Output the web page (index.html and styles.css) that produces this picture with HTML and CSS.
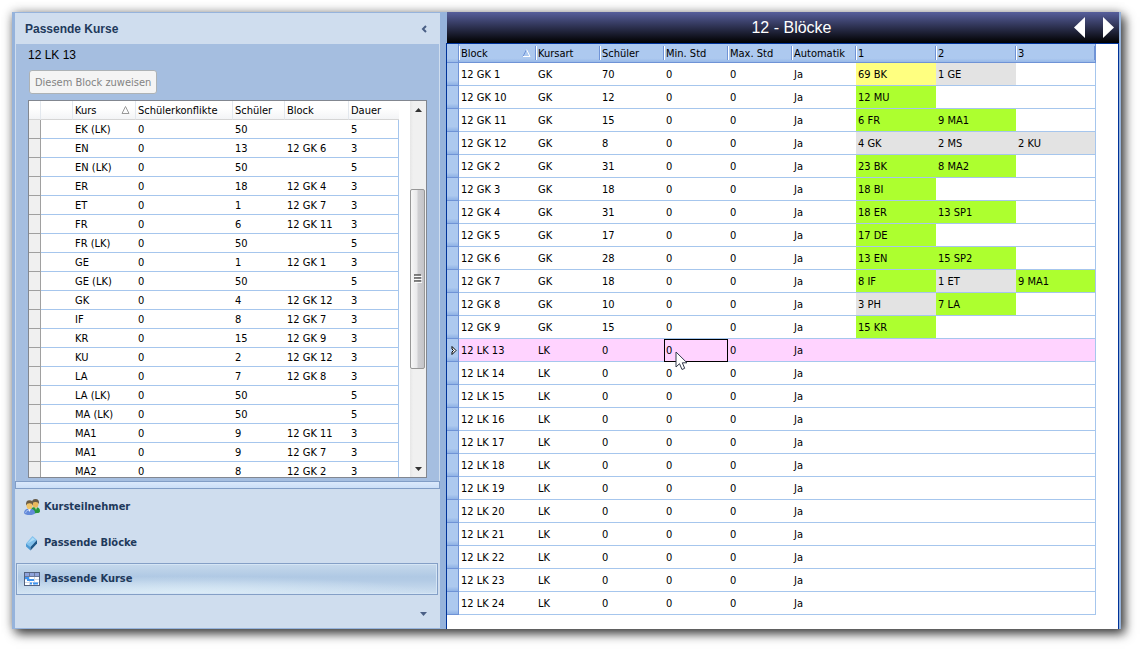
FILE: index.html
```html
<!DOCTYPE html>
<html lang="de">
<head>
<meta charset="utf-8">
<title>12 - Blöcke</title>
<link rel="stylesheet" href="styles.css">
</head>
<body>
<div class="window">
  <aside class="sidebar">
    <header class="side-head">
      <h2>Passende Kurse</h2>
      <button class="collapse" type="button" aria-label="Einklappen">
        <svg width="6" height="8" viewBox="0 0 6 8"><path d="M5 1L2 4L5 7" fill="none" stroke="#4a5f85" stroke-width="2"/></svg>
      </button>
    </header>
    <section class="side-body">
      <div class="block-name">12 LK 13</div>
      <button class="assign" type="button" disabled>Diesem Block zuweisen</button>
      <div class="list">
        <div class="list-view">
          <table class="courses">
            <colgroup><col class="c-mark"><col class="c-indent"><col class="c-kurs"><col class="c-konf"><col class="c-sch"><col class="c-block"><col class="c-dauer"></colgroup>
            <thead><tr><th></th><th></th><th>Kurs<svg class="sort" width="9" height="8" viewBox="0 0 9 8"><path d="M4.5 0.5L8 7.5H1Z" fill="none" stroke="#999"/></svg></th><th>Schülerkonflikte</th><th>Schüler</th><th>Block</th><th>Dauer</th></tr></thead>
            <tbody>
              <tr><td></td><td></td><td>EK (LK)</td><td>0</td><td>50</td><td></td><td>5</td></tr>
              <tr><td></td><td></td><td>EN</td><td>0</td><td>13</td><td>12 GK 6</td><td>3</td></tr>
              <tr><td></td><td></td><td>EN (LK)</td><td>0</td><td>50</td><td></td><td>5</td></tr>
              <tr><td></td><td></td><td>ER</td><td>0</td><td>18</td><td>12 GK 4</td><td>3</td></tr>
              <tr><td></td><td></td><td>ET</td><td>0</td><td>1</td><td>12 GK 7</td><td>3</td></tr>
              <tr><td></td><td></td><td>FR</td><td>0</td><td>6</td><td>12 GK 11</td><td>3</td></tr>
              <tr><td></td><td></td><td>FR (LK)</td><td>0</td><td>50</td><td></td><td>5</td></tr>
              <tr><td></td><td></td><td>GE</td><td>0</td><td>1</td><td>12 GK 1</td><td>3</td></tr>
              <tr><td></td><td></td><td>GE (LK)</td><td>0</td><td>50</td><td></td><td>5</td></tr>
              <tr><td></td><td></td><td>GK</td><td>0</td><td>4</td><td>12 GK 12</td><td>3</td></tr>
              <tr><td></td><td></td><td>IF</td><td>0</td><td>8</td><td>12 GK 7</td><td>3</td></tr>
              <tr><td></td><td></td><td>KR</td><td>0</td><td>15</td><td>12 GK 9</td><td>3</td></tr>
              <tr><td></td><td></td><td>KU</td><td>0</td><td>2</td><td>12 GK 12</td><td>3</td></tr>
              <tr><td></td><td></td><td>LA</td><td>0</td><td>7</td><td>12 GK 8</td><td>3</td></tr>
              <tr><td></td><td></td><td>LA (LK)</td><td>0</td><td>50</td><td></td><td>5</td></tr>
              <tr><td></td><td></td><td>MA (LK)</td><td>0</td><td>50</td><td></td><td>5</td></tr>
              <tr><td></td><td></td><td>MA1</td><td>0</td><td>9</td><td>12 GK 11</td><td>3</td></tr>
              <tr><td></td><td></td><td>MA1</td><td>0</td><td>9</td><td>12 GK 7</td><td>3</td></tr>
              <tr><td></td><td></td><td>MA2</td><td>0</td><td>8</td><td>12 GK 2</td><td>3</td></tr>
            </tbody>
          </table>
        </div>
        <div class="scrollbar" aria-hidden="true">
          <div class="arrow"><svg width="7" height="4" viewBox="0 0 7 4"><path d="M0 4L3.5 0L7 4Z" fill="#333"/></svg></div>
          <div class="gap-top"></div>
          <div class="thumb"><svg width="8" height="9" viewBox="0 0 8 9"><path d="M0 1H7M0 4H7M0 7H7" stroke="#555" stroke-width="1.4"/><path d="M1 2.4H8M1 5.4H8M1 8.4H8" stroke="#fff"/></svg></div>
          <div class="gap-bottom"></div>
          <div class="arrow"><svg width="7" height="4" viewBox="0 0 7 4"><path d="M0 0L3.5 4L7 0Z" fill="#333"/></svg></div>
        </div>
      </div>
    </section>
    <div class="splitter"></div>
    <nav class="nav">
      <button class="nav-item" type="button">
        <svg width="16" height="16" viewBox="0 0 16 16">
          <path d="M7 15V11Q7 8 11 8Q16 8 16 12Q16 14 13 14Z" fill="#27963a"/>
          <path d="M11 8L12 11L13 8Z" fill="#e8f3e0"/>
          <ellipse cx="11.5" cy="5" rx="3" ry="3.7" fill="#e9b85c"/>
          <path d="M8 5Q7.4 0 11.5 0Q15.5 0 15 5Q14 2.5 11 3Q9 3 8 5Z" fill="#665a47"/>
          <path d="M0 14Q0 9.500 5.500 9.500Q11 9.500 11 14Q10 16 5.500 16Q1 16 0 14Z" fill="#6389d9"/>
          <path d="M1.5 14Q2 11 5 11" fill="none" stroke="#a9c2f2"/>
          <path d="M4 9.5L5.5 13L7 9.5Z" fill="#f2f5fb"/>
          <ellipse cx="5.5" cy="6.5" rx="3" ry="3.7" fill="#f0c469"/>
          <path d="M2 6.5Q1.5 1.3 5.5 1.3Q9.5 1.3 9 6.5Q8 4 5.5 4.2Q3 4 2 6.5Z" fill="#6b5c45"/>
        </svg><span>Kursteilnehmer</span>
      </button>
      <button class="nav-item" type="button">
        <svg width="16" height="16" viewBox="0 0 16 16">
          <path d="M2 8.5L8.5 1L13 5L6.5 12Z" fill="#82c1ec"/>
          <path d="M3.5 8.5L8.5 2.5L11 4.5Z" fill="#abdcf8"/>
          <path d="M2 8.5L6.5 12V15.5L2 11.5Z" fill="#4b9ad5"/>
          <path d="M6.5 12L13 5V8.5L6.5 15.5Z" fill="#1d5788"/>
        </svg><span>Passende Blöcke</span>
      </button>
      <button class="nav-item active" type="button">
        <svg width="16" height="16" viewBox="0 0 16 16">
          <rect x="0.5" y="1.5" width="15" height="13" fill="#fff" stroke="#53627f"/>
          <path d="M1 2H15V5H1Z" fill="#8fa3da"/>
          <path d="M1 5.5H15M5.5 2V5M10.5 2V5" fill="none" stroke="#6a7899"/>
          <path d="M5.5 6V14M10.5 6V14M1 8.500H15M1 11.500H15" stroke="#d3dbe9"/>
          <path d="M1 7H5M3 9H10M6 12.500H8M9 12.500H14" stroke="#3d93ef" stroke-width="2"/>
        </svg><span>Passende Kurse</span>
      </button>
      <div class="nav-foot">
        <button type="button" aria-label="Weitere Optionen"><svg width="7" height="4" viewBox="0 0 7 4"><path d="M0 0H7L3.5 4Z" fill="#4a5f85"/></svg></button>
      </div>
    </nav>
  </aside>
  <main class="main">
    <header class="title-bar">
      <h1>12 - Blöcke</h1>
      <div class="pager">
        <button type="button" aria-label="Zurück"><svg width="11" height="21" viewBox="0 0 11 21"><path d="M11 0V21L0 10.5Z" fill="#fff"/></svg></button>
        <button type="button" aria-label="Weiter"><svg width="11" height="21" viewBox="0 0 11 21"><path d="M0 0V21L11 10.5Z" fill="#fff"/></svg></button>
      </div>
    </header>
    <div class="grid-area">
      <table class="blocks">
        <colgroup><col class="b-mark"><col class="b-block"><col span="5" class="b-std"><col span="3" class="b-slot"></colgroup>
        <thead><tr><th></th><th>Block<svg class="sort" width="9" height="8" viewBox="0 0 9 8"><path d="M4.5 0.5L1 7.5" stroke="#6f93d6"/><path d="M4.5 0.5L8 7.5H1" fill="none" stroke="#fff"/></svg></th><th>Kursart</th><th>Schüler</th><th>Min. Std</th><th>Max. Std</th><th>Automatik</th><th>1</th><th>2</th><th>3</th></tr></thead>
        <tbody>
          <tr><td></td><td>12 GK 1</td><td>GK</td><td>70</td><td>0</td><td>0</td><td>Ja</td><td class="warn">69 BK</td><td class="few">1 GE</td><td></td></tr>
          <tr><td></td><td>12 GK 10</td><td>GK</td><td>12</td><td>0</td><td>0</td><td>Ja</td><td class="ok">12 MU</td><td></td><td></td></tr>
          <tr><td></td><td>12 GK 11</td><td>GK</td><td>15</td><td>0</td><td>0</td><td>Ja</td><td class="ok">6 FR</td><td class="ok">9 MA1</td><td></td></tr>
          <tr><td></td><td>12 GK 12</td><td>GK</td><td>8</td><td>0</td><td>0</td><td>Ja</td><td class="few">4 GK</td><td class="few">2 MS</td><td class="few">2 KU</td></tr>
          <tr><td></td><td>12 GK 2</td><td>GK</td><td>31</td><td>0</td><td>0</td><td>Ja</td><td class="ok">23 BK</td><td class="ok">8 MA2</td><td></td></tr>
          <tr><td></td><td>12 GK 3</td><td>GK</td><td>18</td><td>0</td><td>0</td><td>Ja</td><td class="ok">18 BI</td><td></td><td></td></tr>
          <tr><td></td><td>12 GK 4</td><td>GK</td><td>31</td><td>0</td><td>0</td><td>Ja</td><td class="ok">18 ER</td><td class="ok">13 SP1</td><td></td></tr>
          <tr><td></td><td>12 GK 5</td><td>GK</td><td>17</td><td>0</td><td>0</td><td>Ja</td><td class="ok">17 DE</td><td></td><td></td></tr>
          <tr><td></td><td>12 GK 6</td><td>GK</td><td>28</td><td>0</td><td>0</td><td>Ja</td><td class="ok">13 EN</td><td class="ok">15 SP2</td><td></td></tr>
          <tr><td></td><td>12 GK 7</td><td>GK</td><td>18</td><td>0</td><td>0</td><td>Ja</td><td class="ok">8 IF</td><td class="few">1 ET</td><td class="ok">9 MA1</td></tr>
          <tr><td></td><td>12 GK 8</td><td>GK</td><td>10</td><td>0</td><td>0</td><td>Ja</td><td class="few">3 PH</td><td class="ok">7 LA</td><td></td></tr>
          <tr><td></td><td>12 GK 9</td><td>GK</td><td>15</td><td>0</td><td>0</td><td>Ja</td><td class="ok">15 KR</td><td></td><td></td></tr>
          <tr class="selected"><td><svg class="marker" width="6" height="9" viewBox="0 0 6 9"><path d="M1 0.5L5 4.5L1 8.5V6L2.5 4.5L1 3Z" fill="#fff" stroke="#000" stroke-width="1"/></svg></td><td>12 LK 13</td><td>LK</td><td>0</td><td class="focus">0<svg class="cursor" width="13" height="20" viewBox="0 0 13 20"><path d="M1 1V16L4.5 12.7L7 18.5L9.7 17.3L7.3 11.8H12Z" fill="#fff" stroke="#333a4c"/></svg></td><td>0</td><td>Ja</td><td></td><td></td><td></td></tr>
          <tr><td></td><td>12 LK 14</td><td>LK</td><td>0</td><td>0</td><td>0</td><td>Ja</td><td></td><td></td><td></td></tr>
          <tr><td></td><td>12 LK 15</td><td>LK</td><td>0</td><td>0</td><td>0</td><td>Ja</td><td></td><td></td><td></td></tr>
          <tr><td></td><td>12 LK 16</td><td>LK</td><td>0</td><td>0</td><td>0</td><td>Ja</td><td></td><td></td><td></td></tr>
          <tr><td></td><td>12 LK 17</td><td>LK</td><td>0</td><td>0</td><td>0</td><td>Ja</td><td></td><td></td><td></td></tr>
          <tr><td></td><td>12 LK 18</td><td>LK</td><td>0</td><td>0</td><td>0</td><td>Ja</td><td></td><td></td><td></td></tr>
          <tr><td></td><td>12 LK 19</td><td>LK</td><td>0</td><td>0</td><td>0</td><td>Ja</td><td></td><td></td><td></td></tr>
          <tr><td></td><td>12 LK 20</td><td>LK</td><td>0</td><td>0</td><td>0</td><td>Ja</td><td></td><td></td><td></td></tr>
          <tr><td></td><td>12 LK 21</td><td>LK</td><td>0</td><td>0</td><td>0</td><td>Ja</td><td></td><td></td><td></td></tr>
          <tr><td></td><td>12 LK 22</td><td>LK</td><td>0</td><td>0</td><td>0</td><td>Ja</td><td></td><td></td><td></td></tr>
          <tr><td></td><td>12 LK 23</td><td>LK</td><td>0</td><td>0</td><td>0</td><td>Ja</td><td></td><td></td><td></td></tr>
          <tr><td></td><td>12 LK 24</td><td>LK</td><td>0</td><td>0</td><td>0</td><td>Ja</td><td></td><td></td><td></td></tr>
        </tbody>
      </table>
    </div>
  </main>
</div>
</body>
</html>
```
FILE: styles.css
```css
* { box-sizing: border-box; }

body {
  margin: 0;
  min-height: 100vh;
  padding: 12px 20px 20px 12px;
  display: flex;
  background: #fff;
  color: #000;
  font: 11px/14px Tahoma, "DejaVu Sans Condensed", "DejaVu Sans", sans-serif;
}

button {
  margin: 0;
  padding: 0;
  border: 0;
  background: none;
  color: inherit;
  font: inherit;
}

svg { display: block; flex: none; }

.window {
  flex: 1;
  display: flex;
  background: #96b3db;
  box-shadow: 4px 5px 10px rgba(0, 0, 0, .7), 0 0 10px rgba(0, 0, 0, .3);
}

/* Left panel */
.sidebar {
  flex: none;
  width: 428px;
  padding: 1px 0 1px 3px;
  display: flex;
  flex-direction: column;
}

.side-head {
  height: 31px;
  padding: 0 13px 0 10px;
  display: flex;
  align-items: center;
  justify-content: space-between;
  background: #cfddee;
}

.side-head h2 {
  margin: 0;
  color: #1e395b;
  font: bold 12px/14px "Liberation Sans", Arial, sans-serif;
}

.side-body {
  flex: 1;
  min-height: 0;
  padding: 4px 12px 3px;
  display: flex;
  flex-direction: column;
  align-items: flex-start;
  background: #a5bee0;
  border: solid #cfddee;
  border-width: 0 1px;
}

.block-name { font: 12px/14px "Liberation Sans", Arial, sans-serif; }

.assign {
  height: 24px;
  margin: 8px 0 6px 1px;
  padding: 1px 5px 0;
  border: 1px solid #adb2b5;
  border-radius: 3px;
  background: #f4f4f4;
  color: #838383;
}

.list {
  flex: 1 1 0;
  min-height: 0;
  align-self: stretch;
  display: flex;
  justify-content: space-between;
  overflow: hidden;
  border: 1px solid #828790;
  background: #fff;
}

.list-view { height: 0; }

table {
  table-layout: fixed;
  border-collapse: separate;
  border-spacing: 0;
}

th, td {
  padding: 2px 0 0 2px;
  text-align: left;
  font-weight: normal;
  white-space: nowrap;
}

th { position: relative; }

.sort { position: absolute; top: 5px; right: 5px; }

.courses { width: 370px; }
.c-mark { width: 12px; }
.c-indent { width: 32px; }
.c-kurs { width: 63px; }
.c-konf { width: 97px; }
.c-sch { width: 52px; }
.c-block { width: 64px; }
.c-dauer { width: 50px; }

.courses th {
  height: 19px;
  border-bottom: 1px solid #d5d5d5;
  border-right: 1px solid #e3e8ee;
  background: linear-gradient(#fff 40%, #f3f4f6);
}
.courses th:last-child { border-right: 0; }
.courses td { height: 19px; border-bottom: 1px solid #a6c6ed; }
.courses td:first-child {
  border-right: 1px solid #a0a0a0;
  border-bottom-color: #a0a0a0;
  background: #f0f0f0;
}
.courses td:last-child { border-right: 1px solid #a6c6ed; }

.scrollbar {
  width: 16px;
  display: flex;
  flex-direction: column;
  background: linear-gradient(90deg, #e6e6e6, #f0f0f0 20%);
}

.arrow {
  height: 17px;
  display: flex;
  align-items: center;
  justify-content: center;
}

.gap-top { flex: 71; }
.gap-bottom { flex: 92; }
.thumb {
  flex: 179;
  margin-right: 1px;
  display: flex;
  align-items: center;
  justify-content: center;
  border: 1px solid #979797;
  border-radius: 2px;
  background: linear-gradient(90deg, #f7f7f7, #e9e9eb 45%, #cfcfd2 55%, #c4c4c8);
}

.splitter {
  height: 8px;
  border: 1px solid #819dc6;
  background: linear-gradient(#dbe9fc, #cadef7);
}

.nav {
  display: flex;
  flex-direction: column;
  gap: 4px;
  padding: 2px 2px 0 1px;
  background: #cfddee;
}

.nav-item {
  height: 32px;
  padding: 0 7px;
  display: flex;
  align-items: center;
  gap: 4px;
  border: 1px solid transparent;
  color: #1e395b;
  font-weight: bold;
}

.nav-item.active {
  border-color: #849fc6;
  background: radial-gradient(ellipse 60% 60% at 40% 100%, rgba(222, 238, 248, .9), transparent),
    linear-gradient(#c6d9ec, #b0c9e4 42%, #b3cbe5 55%, #cddff0);
  box-shadow: inset 0 0 0 1px #d5e5f5;
}

.nav-foot {
  height: 29px;
  padding: 0 11px;
  display: flex;
  align-items: center;
  justify-content: flex-end;
}

/* Block overview */
.main {
  flex: 1;
  min-width: 0;
  margin: 0 2px 0 6px;
  display: flex;
  flex-direction: column;
}

.title-bar {
  height: 31px;
  margin-left: 1px;
  padding: 0 5px 0 62px;
  display: flex;
  align-items: center;
  background: linear-gradient(#575f9c, #000);
  color: #fff;
}

.title-bar h1 {
  flex: 1;
  margin: 0;
  text-align: center;
  font: 16px/20px "Liberation Sans", Arial, sans-serif;
}

.pager { display: flex; gap: 18px; }

.grid-area {
  flex: 1;
  border: solid #003399;
  border-width: 1px 1px 0;
  background: #fff;
}

.blocks { width: 649px; }
.b-mark { width: 12px; }
.b-block { width: 77px; }
.b-std { width: 64px; }
.b-slot { width: 80px; }

.blocks th {
  height: 19px;
  border-bottom: 1px solid #6f93d6;
  background: linear-gradient(#6f93d6, #6f93d6) right 2px / 1px 14px no-repeat,
    linear-gradient(#fff, #fff) left 2px / 1px 14px no-repeat,
    linear-gradient(#adc9ef 80%, #98b9e8);
}
.blocks th:first-child {
  border-right: 1px solid #6f93d6;
  background: linear-gradient(#adc9ef 80%, #98b9e8);
}
.blocks th:last-child { border-right: 1px solid #6f93d6; }

.blocks td { height: 23px; border-bottom: 1px solid #a6c6ed; }
.blocks td:first-child {
  padding: 0 0 0 4px;
  border-right: 1px solid #6f93d6;
  border-bottom: 1px solid #6f93d6;
  background: linear-gradient(#adc9ef 80%, #8fb2e6);
}
.blocks td:last-child { border-right: 1px solid #a6c6ed; }

.blocks .warn { background: #ffff80; }
.blocks .few { background: #e3e3e3; }
.blocks .ok { background: #adff2f; }
.selected td { background: #ffd3ff; }

.focus {
  position: relative;
  outline: 1px solid #000;
  outline-offset: -1px;
}

.cursor { position: absolute; left: 11px; top: 12px; }
```
